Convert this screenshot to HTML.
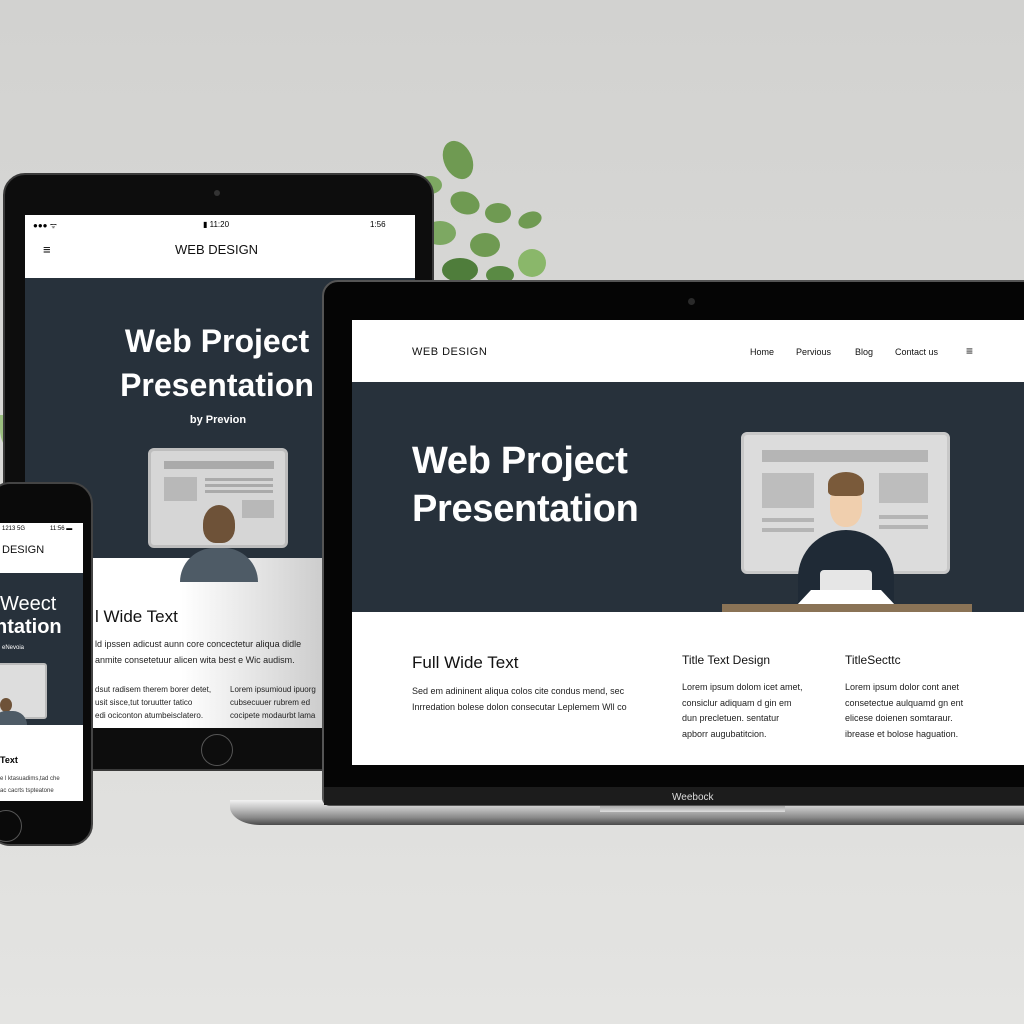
<!DOCTYPE html>
<html><head><meta charset="utf-8"><style>
*{margin:0;padding:0;box-sizing:border-box}
body{width:1024px;height:1024px;overflow:hidden;position:relative;font-family:"Liberation Sans",sans-serif;background:linear-gradient(180deg,#d2d2d0 0%,#dadad8 50%,#e4e4e2 100%)}
.a{position:absolute}
.dark{background:#27313b}
.t{color:#222;font-size:9px;line-height:15.5px}
</style></head><body>

<!-- plant -->
<svg class="a" style="left:370px;top:135px" width="190" height="150" viewBox="0 0 190 150">
<g fill="#6f9a52"><ellipse cx="88" cy="25" rx="14" ry="20" transform="rotate(-25 88 25)"/>
<ellipse cx="40" cy="72" rx="16" ry="11"/><ellipse cx="95" cy="68" rx="15" ry="11" transform="rotate(20 95 68)"/>
<ellipse cx="128" cy="78" rx="13" ry="10"/><ellipse cx="160" cy="85" rx="12" ry="8" transform="rotate(-20 160 85)"/>
<ellipse cx="30" cy="105" rx="17" ry="12" fill="#5a8a44"/><ellipse cx="70" cy="98" rx="16" ry="12" fill="#7da862"/><ellipse cx="115" cy="110" rx="15" ry="12"/>
<ellipse cx="162" cy="128" rx="14" ry="14" fill="#8ab76a"/><ellipse cx="45" cy="135" rx="18" ry="12" fill="#4f7d3b"/><ellipse cx="90" cy="135" rx="18" ry="12" fill="#4f7d3b"/><ellipse cx="130" cy="140" rx="14" ry="9" fill="#5a8a44"/><ellipse cx="60" cy="50" rx="12" ry="9" fill="#7da862"/></g>
</svg>
<div class="a" style="left:0;top:415px;width:20px;height:35px;background:#9cbf80;border-radius:0 60% 0 60%"></div>

<!-- tablet -->
<div class="a" style="left:3px;top:173px;width:431px;height:598px;background:#0d0d0d;border-radius:22px;border:2px solid #3a3a3a"></div>
<div class="a" style="left:214px;top:190px;width:6px;height:6px;border-radius:50%;background:#333"></div>
<div class="a" style="left:25px;top:215px;width:390px;height:513px;background:#fff;overflow:hidden">
 <div class="a" style="left:8px;top:5px;font-size:8px">●●● ᯤ</div>
 <div class="a" style="left:178px;top:5px;font-size:8px">▮ 11:20</div>
 <div class="a" style="left:345px;top:5px;font-size:8px">1:56</div>
 <div class="a" style="left:18px;top:27px;font-size:13px">≡</div>
 <div class="a" style="left:150px;top:27px;font-size:13px;color:#111">WEB DESIGN</div>
 <div class="a dark" style="left:0;top:63px;width:390px;height:280px"></div>
 <div class="a" style="left:72px;top:104px;width:240px;text-align:center;color:#fff;font-weight:bold;font-size:32px;line-height:44px">Web Project<br>Presentation</div>
 <div class="a" style="left:148px;top:199px;width:90px;text-align:center;color:#fff;font-weight:bold;font-size:11px">by Previon</div>
 <div class="a" style="left:123px;top:233px;width:140px;height:100px;background:#d6d6d6;border-radius:6px;border:3px solid #bdbdbd"></div>
 <div class="a" style="left:139px;top:246px;width:110px;height:8px;background:#aaa"></div>
 <div class="a" style="left:139px;top:262px;width:33px;height:24px;background:#b8b8b8"></div>
 <div class="a" style="left:180px;top:263px;width:68px;height:3px;background:#aaa;box-shadow:0 6px #aaa,0 12px #aaa"></div>
 <div class="a" style="left:217px;top:285px;width:32px;height:18px;background:#b8b8b8"></div>
 <div class="a" style="left:0;top:343px;width:390px;height:170px;background:linear-gradient(90deg,#fff 40%,#ddd 65%,#aaa 100%)"></div>
 <div class="a" style="left:178px;top:290px;width:32px;height:38px;background:#6e5238;border-radius:50% 50% 40% 40%"></div>
 <div class="a" style="left:155px;top:333px;width:78px;height:34px;background:#4e5b66;border-radius:40px 40px 0 0"></div>
 <div class="a" style="left:70px;top:392px;font-size:17px;color:#111">l Wide Text</div>
 <div class="a t" style="left:70px;top:422px;font-size:9px">ld ipssen adicust aunn core concectetur aliqua didle<br>anmite consetetuur alicen wita best e Wic audism.</div>
 <div class="a t" style="left:70px;top:468px;font-size:8px;line-height:13px">dsut radisem therem borer detet,<br>usit sisce,tut toruutter tatico<br>edi ociconton atumbeisclatero.</div>
 <div class="a t" style="left:205px;top:468px;font-size:8px;line-height:13px">Lorem ipsumioud ipuorg<br>cubsecuuer rubrem ed<br>cocipete modaurbt lama</div>
</div>
<div class="a" style="left:201px;top:734px;width:32px;height:32px;border-radius:50%;border:1.5px solid #555"></div>

<!-- phone -->
<div class="a" style="left:-12px;top:482px;width:105px;height:364px;background:#0a0a0a;border-radius:22px;border:2px solid #444"></div>
<div class="a" style="left:0;top:523px;width:83px;height:278px;background:#fff;overflow:hidden">
 <div class="a" style="left:2px;top:3px;font-size:6px">1213 5G</div>
 <div class="a" style="left:50px;top:3px;font-size:6px">11:56 ▬</div>
 <div class="a" style="left:2px;top:21px;font-size:11px;color:#111">DESIGN</div>
 <div class="a dark" style="left:0;top:50px;width:83px;height:152px"></div>
 <div class="a" style="left:0;top:70px;color:#fff;font-size:20px;line-height:23px;white-space:nowrap">Weect<br><b style="margin-left:-5px">ntation</b></div>
 <div class="a" style="left:2px;top:122px;color:#fff;font-size:6px">eNevoia</div>
 <div class="a" style="left:-5px;top:140px;width:52px;height:56px;background:#ddd;border-radius:3px;border:2px solid #bbb"></div>
 <div class="a" style="left:0;top:175px;width:12px;height:14px;background:#6e5238;border-radius:50%"></div>
 <div class="a" style="left:-8px;top:188px;width:35px;height:14px;background:#4e5b66;border-radius:20px 20px 0 0"></div>
 <div class="a" style="left:0;top:232px;font-size:9px;font-weight:bold">Text</div>
 <div class="a" style="left:0;top:250px;font-size:6px;line-height:12px;color:#333;white-space:nowrap">e l ktasuadims,tad che<br>ac cacrts tspteatone</div>
</div>
<div class="a" style="left:-10px;top:810px;width:32px;height:32px;border-radius:50%;border:1.5px solid #555"></div>

<!-- laptop -->
<div class="a" style="left:230px;top:800px;width:794px;height:25px;background:linear-gradient(180deg,#f2f2f2 0%,#c8c8c8 30%,#8a8a8a 70%,#4a4a4a 100%);border-radius:0 0 0 30px/0 0 0 18px"></div>
<div class="a" style="left:600px;top:804px;width:185px;height:8px;background:linear-gradient(180deg,#999,#ddd)"></div>
<div class="a" style="left:322px;top:280px;width:710px;height:526px;background:#050505;border-radius:16px 0 0 8px;border:2px solid #555"></div>
<div class="a" style="left:324px;top:787px;width:700px;height:18px;background:#1c1c1c"></div>
<div class="a" style="left:672px;top:792px;font-size:10px;color:#ddd">Weebock</div>
<div class="a" style="left:688px;top:298px;width:7px;height:7px;border-radius:50%;background:#2a2a2a"></div>
<div class="a" style="left:352px;top:320px;width:672px;height:445px;background:#fff;overflow:hidden">
 <div class="a" style="left:60px;top:26px;font-size:11px;color:#111;letter-spacing:.5px">WEB DESIGN</div>
 <div class="a" style="left:398px;top:27px;font-size:9px;color:#111">Home</div>
 <div class="a" style="left:444px;top:27px;font-size:9px;color:#111">Pervious</div>
 <div class="a" style="left:503px;top:27px;font-size:9px;color:#111">Blog</div>
 <div class="a" style="left:543px;top:27px;font-size:9px;color:#111">Contact us</div>
 <div class="a" style="left:614px;top:24px;font-size:12px;color:#111">≡</div>
 <div class="a dark" style="left:0;top:62px;width:672px;height:230px"></div>
 <div class="a" style="left:60px;top:117px;color:#fff;font-weight:bold;font-size:38px;line-height:48px;letter-spacing:-0.3px">Web Project<br>Presentation</div>
 <div class="a" style="left:389px;top:112px;width:209px;height:142px;background:#dcdcdc;border-radius:6px;border:3px solid #c8c8c8"></div>
 <div class="a" style="left:410px;top:130px;width:166px;height:12px;background:#b5b5b5"></div>
 <div class="a" style="left:410px;top:153px;width:52px;height:35px;background:#bdbdbd"></div>
 <div class="a" style="left:527px;top:153px;width:49px;height:30px;background:#bdbdbd"></div>
 <div class="a" style="left:410px;top:198px;width:52px;height:4px;background:#b5b5b5;box-shadow:0 10px #b5b5b5"></div>
 <div class="a" style="left:527px;top:195px;width:49px;height:4px;background:#b5b5b5;box-shadow:0 10px #b5b5b5"></div>
 <div class="a" style="left:478px;top:165px;width:32px;height:42px;background:#f0cfae;border-radius:40% 40% 45% 45%"></div>
 <div class="a" style="left:476px;top:152px;width:36px;height:24px;background:#7a5a3a;border-radius:50% 50% 20% 20%"></div>
 <div class="a" style="left:446px;top:210px;width:96px;height:80px;background:#1f2a36;border-radius:48px 48px 0 0"></div>
 <div class="a" style="left:468px;top:250px;width:52px;height:36px;background:#e6e6e6;border-radius:4px"></div>
 <div class="a" style="left:444px;top:270px;width:100px;height:16px;background:#fff;clip-path:polygon(15% 0,85% 0,100% 100%,0 100%)"></div>
 <div class="a" style="left:370px;top:284px;width:250px;height:8px;background:#8a7356"></div>
 <div class="a" style="left:60px;top:333px;font-size:17px;color:#111">Full Wide Text</div>
 <div class="a t" style="left:60px;top:364px">Sed em adininent aliqua colos cite condus mend, sec<br>Inrredation bolese dolon consecutar Leplemem Wll co</div>
 <div class="a" style="left:330px;top:333px;font-size:12px;color:#111">Title Text Design</div>
 <div class="a t" style="left:330px;top:360px">Lorem ipsum dolom icet amet,<br>consiclur adiquam d gin em<br>dun precletuen. sentatur<br>apborr augubatitcion.</div>
 <div class="a" style="left:493px;top:333px;font-size:12px;color:#111">TitleSecttc</div>
 <div class="a t" style="left:493px;top:360px">Lorem ipsum dolor cont anet<br>consetectue aulquamd gn ent<br>elicese doienen somtaraur.<br>ibrease et bolose haguation.</div>
</div>
</body></html>
